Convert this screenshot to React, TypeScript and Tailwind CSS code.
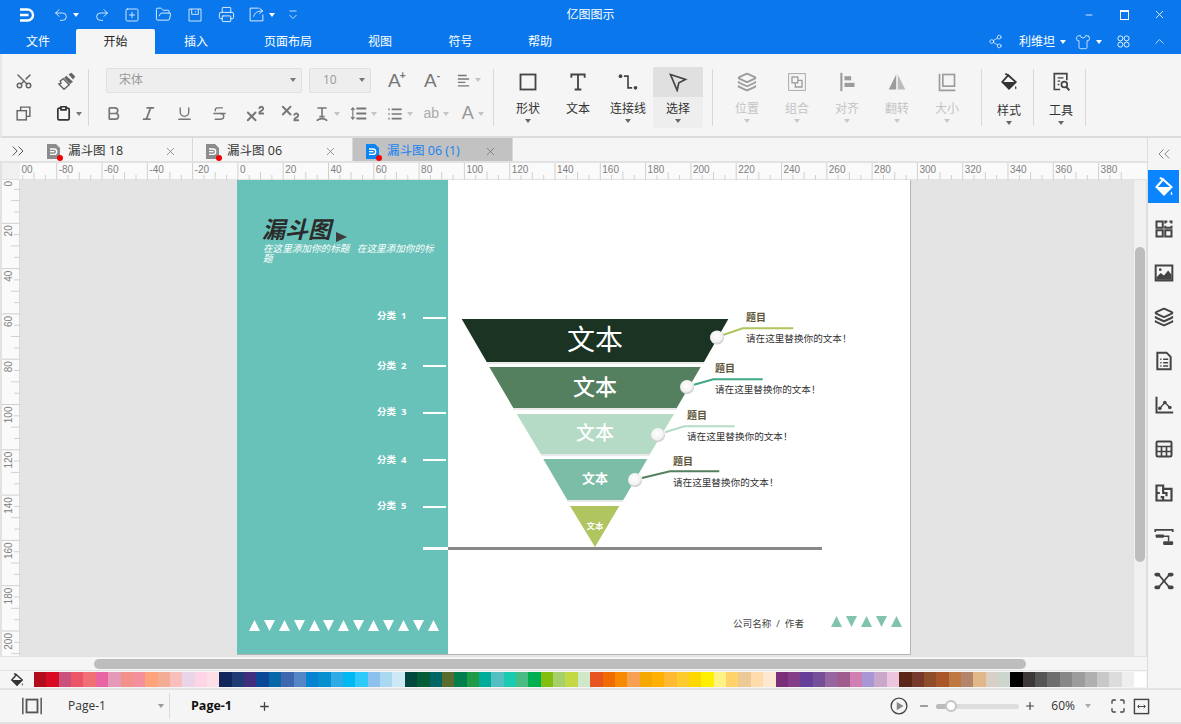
import React from 'react';
import { Undo2, Redo2, SquarePlus, FolderOpen, Printer, Scissors, Layers, Share2, Shirt, ChevronUp, ChevronsRight, ChevronsLeft, X, Minus, Plus, Maximize, Bold, Italic, Underline, Strikethrough, Superscript, Subscript } from 'lucide-react';

const swatches = [
  '#b30c1c', '#d90b22', '#c9517c', '#ec5568', '#f07076', '#e864a3', '#e598b8', '#f19189', '#f4909e', '#ffa37a', '#f3ad97', '#f9bfbd', '#ead5e8', '#ffd5e6', '#fde0e6',
  '#11265a', '#203a75', '#412d7d', '#0a4796', '#0767a8', '#4166b0', '#5586c6', '#0783d2', '#078fd0', '#2eabe4', '#00b8f2', '#2fc9fa', '#8bc1ec', '#a8d9f0', '#cde9f5',
  '#00473e', '#015c37', '#006665', '#5a6b2f', '#007e4c', '#1f9a46', '#00ad9a', '#53bfc3', '#19ccb0', '#48bc83', '#00b050', '#82bd10', '#a6d16a', '#c2d845', '#cfe8c9',
  '#e9531f', '#f06c00', '#f68b00', '#f7a054', '#f5a800', '#ffb000', '#ffba33', '#fdcb2e', '#ffd800', '#fff000', '#fff385', '#ffd36a', '#ecca96', '#fedcab', '#fde8d2',
  '#7b2f78', '#843e89', '#653f98', '#755099', '#96679f', '#a05c8e', '#cf7fb1', '#a996d4', '#c9a8cc', '#eec5df',
  '#5b2618', '#77392c', '#8e4e2a', '#a95728', '#bf783f', '#b3866b', '#e1b988', '#d8cfc6', '#ccd6cd',
  '#000000', '#3c3838', '#555555', '#6d6d6d', '#888888', '#9c9c9c', '#b0b0b0', '#c8c8c8', '#dcdcdc', '#eeeeee', '#ffffff',
];

const menus = [
  { label: '文件', w: 'w-[76px]' },
  { label: '开始', w: 'w-[79px]', active: true },
  { label: '插入', w: 'w-[82px]' },
  { label: '页面布局', w: 'w-[102px]' },
  { label: '视图', w: 'w-[82px]' },
  { label: '符号', w: 'w-[79px]' },
  { label: '帮助', w: 'w-[80px]' },
];

const Caret = ({ color = 'border-t-[#777]' }: { color?: string }) => (
  <span className={`inline-block w-0 h-0 border-x-[3.5px] border-t-[4px] border-x-transparent ${color}`} />
);

const Ico = ({ size = 20, sw = 2, children, className = '' }: { size?: number; sw?: number; children: React.ReactNode; className?: string }) => (
  <svg width={size} height={size} viewBox="0 0 24 24" fill="none" stroke="currentColor" strokeWidth={sw} className={className}>
    {children}
  </svg>
);

const Bucket = ({ size = 20, className = '' }: { size?: number; className?: string }) => (
  <svg width={size} height={size} viewBox="0 0 24 24" className={className}>
    <path d="M11 3 L21 12 L12 21 L3 12 Z" fill="none" stroke="currentColor" strokeWidth="2.4" />
    <path d="M3.5 12 H20.5 L12 20.5 Z" fill="currentColor" />
    <path d="M11 3 L7 1" stroke="currentColor" strokeWidth="2.4" />
    <path d="M21 17 q2 3 0 5 q-2 -2 0 -5" fill="currentColor" />
  </svg>
);

const DocIcon = ({ blue }: { blue?: boolean }) => (
  <span className="relative w-[14px] h-[15px] shrink-0">
    <svg width="14" height="15" viewBox="0 0 14 15" className="block">
      <path d="M0 0 H9 L13 4 V15 H0 Z" fill={blue ? '#0a84f5' : '#8c8c8c'} />
      <path d="M3 5 H7 a2.6 2.6 0 0 1 0 5.4 H3 M3 7.7 H7.5" fill="none" stroke="#fff" strokeWidth="1.3" />
    </svg>
    <span className="absolute -right-[2px] -bottom-[2px] w-[6px] h-[6px] rounded-full bg-[#f00000]" />
  </span>
);

const DocTab = ({ label, active, w }: { label: string; active?: boolean; w: string }) => (
  <div className={`flex items-center h-full pl-[13px] pt-[3px] border-r border-[#d9d9d9] ${w} ${active ? 'bg-[#c2c2c2] text-[#1681f0]' : 'text-[#333]'}`}>
    <DocIcon blue={active} />
    <span className="ml-[7px] text-[12.5px] flex-1">{label}</span>
    <X size={13} strokeWidth={1.2} className="text-[#666] mr-[15px]" />
  </div>
);

const BigButton = ({ label, icon, disabled, active, w = 'w-[50px]', low, noCaret }: { label: string; icon: React.ReactNode; disabled?: boolean; active?: boolean; w?: string; low?: boolean; noCaret?: boolean }) => (
  <div className={`flex flex-col items-center ${w} h-[61px] rounded-[2px] ${active ? 'bg-[#eeeeee]' : ''}`}>
    <div className={`w-full h-[30px] flex items-center justify-center rounded-t-[2px] ${active ? 'bg-[#e0e0e0]' : ''} ${disabled ? 'text-[#9c9c9c]' : 'text-[#444]'}`}>{icon}</div>
    <div className={`text-[12px] leading-[16px] ${low ? 'mt-[6px] text-[#111]' : 'mt-[4px]'} ${disabled ? 'text-[#c4c4c4]' : 'text-[#333]'}`}>{label}</div>
    {!noCaret && <div className="mt-[2px] leading-[6px] flex"><Caret color={disabled ? 'border-t-[#c8c8c8]' : 'border-t-[#666]'} /></div>}
  </div>
);

const Sep = () => <div className="w-px h-[57px] bg-[#d8d8d8] shrink-0" />;

const Cell = ({ children }: { children: React.ReactNode }) => (
  <div className="w-[35.5px] h-[26px] flex items-center justify-center text-[#777]">{children}</div>
);

const DropCell = ({ children }: { children: React.ReactNode }) => (
  <div className="w-[36.5px] h-[26px] flex items-center justify-center gap-[4px] text-[#777]">
    <span className="flex items-center justify-center">{children}</span>
    <Caret color="border-t-[#c4c4c4]" />
  </div>
);

const HRuler = () => {
  const marks = Array.from({ length: 25 }, (_, i) => i - 5);
  return (
    <svg width="1112" height="17" viewBox="20 163 1112 17" className="block font-['Liberation_Sans',sans-serif]">
      {marks.map(k => {
        const x = 237.9 + k * 45.3;
        return (
          <g key={k}>
            <line x1={x} y1={163} x2={x} y2={180} stroke="#d0d0d0" />
            <line x1={x + 11.3} y1={175} x2={x + 11.3} y2={180} stroke="#d0d0d0" />
            <line x1={x + 22.6} y1={172} x2={x + 22.6} y2={180} stroke="#d0d0d0" />
            <line x1={x + 34} y1={175} x2={x + 34} y2={180} stroke="#d0d0d0" />
            {k === -5 ? (
              <text x={21.5} y={172.5} fontSize="10" fill="#808080">00</text>
            ) : (
              <text x={x + 2} y={172.5} fontSize="10" fill="#808080">{k * 20}</text>
            )}
          </g>
        );
      })}
    </svg>
  );
};

const VRuler = () => {
  const marks = Array.from({ length: 11 }, (_, i) => i);
  return (
    <svg width="18" height="476" viewBox="2 180 18 476" className="block font-['Liberation_Sans',sans-serif]">
      {marks.map(k => {
        const y = 178 + k * 45.3;
        return (
          <g key={k}>
            <line x1={2} y1={y} x2={20} y2={y} stroke="#d0d0d0" />
            <line x1={14} y1={y + 11.3} x2={20} y2={y + 11.3} stroke="#d0d0d0" />
            <line x1={11} y1={y + 22.6} x2={20} y2={y + 22.6} stroke="#d0d0d0" />
            <line x1={14} y1={y + 34} x2={20} y2={y + 34} stroke="#d0d0d0" />
            <text x={0} y={0} fontSize="10" fill="#808080" textAnchor="end" transform={`translate(12 ${k === 0 ? y + 3 : y + 2}) rotate(-90)`}>{k * 20}</text>
          </g>
        );
      })}
    </svg>
  );
};

const Tri = ({ down, color }: { down?: boolean; color: string }) => (
  <svg width="11" height="11" viewBox="0 0 11 11" className="block">
    <path d={down ? 'M0 0 H11 L5.5 11 Z' : 'M5.5 0 L11 11 H0 Z'} fill={color} />
  </svg>
);

const categories = [
  { label: '分类  1', top: 'top-[129px]', tick: 'top-[137px]' },
  { label: '分类  2', top: 'top-[179px]', tick: 'top-[185px]' },
  { label: '分类  3', top: 'top-[225px]', tick: 'top-[232px]' },
  { label: '分类  4', top: 'top-[273px]', tick: 'top-[279px]' },
  { label: '分类  5', top: 'top-[319px]', tick: 'top-[326px]' },
];

const callouts = [
  { pos: 'left-[509px] top-[131px]' },
  { pos: 'left-[478px] top-[182px]' },
  { pos: 'left-[450px] top-[229px]' },
  { pos: 'left-[436px] top-[275px]' },
];

const Funnel = () => (
  <svg width="674" height="475" viewBox="237 180 674 475" className="absolute left-0 top-0">
    <defs>
      <radialGradient id="knob" cx="45%" cy="40%" r="60%">
        <stop offset="0%" stopColor="#ffffff" />
        <stop offset="70%" stopColor="#f2f2f2" />
        <stop offset="100%" stopColor="#c4c4c4" />
      </radialGradient>
    </defs>
    <path d="M461.7 319 H728.3 L704 362 H486.7 Z" fill="#1b3322" />
    <line x1="487" y1="363" x2="704" y2="363" stroke="#d4d4d4" />
    <path d="M489.3 367 H700.7 L676.7 408 H513.3 Z" fill="#55805f" />
    <line x1="513" y1="409" x2="677" y2="409" stroke="#d4d4d4" />
    <path d="M516.7 414 H674 L650 454 H540.7 Z" fill="#b5dbc6" />
    <line x1="541" y1="455" x2="650" y2="455" stroke="#d4d4d4" />
    <path d="M543.3 459 H647.3 L623.3 500 H567.3 Z" fill="#7bbda6" />
    <line x1="567" y1="501" x2="623" y2="501" stroke="#d4d4d4" />
    <path d="M570 506 H619.3 L595 547 Z" fill="#b0c45f" />
    <rect x="448" y="547" width="374" height="3" fill="#888888" />

    <polyline points="723,335 742.7,328.3 793.3,328.3" fill="none" stroke="#b0c45f" strokeWidth="2" />
    <polyline points="694,384.7 713.3,379.3 762.7,379.3" fill="none" stroke="#3fa886" strokeWidth="2" />
    <polyline points="665,432.3 684.3,426.3 734.7,426.3" fill="none" stroke="#b5dbc6" strokeWidth="2" />
    <polyline points="642,478 670,471.3 719.3,471.3" fill="none" stroke="#55805f" strokeWidth="2" />

    <circle cx="717" cy="337.5" r="7" fill="url(#knob)" />
    <circle cx="687" cy="387" r="7" fill="url(#knob)" />
    <circle cx="658" cy="435" r="7" fill="url(#knob)" />
    <circle cx="635" cy="480" r="7" fill="url(#knob)" />

    <text x="595" y="350" fontSize="28" fill="#fff" textAnchor="middle">文本</text>
    <text x="595" y="395" fontSize="22" fontWeight="500" fill="#fff" textAnchor="middle">文本</text>
    <text x="595" y="440" fontSize="19" fontWeight="500" fill="#fff" textAnchor="middle">文本</text>
    <text x="595" y="483" fontSize="13" fontWeight="700" fill="#fff" textAnchor="middle">文本</text>
    <text x="595" y="529" fontSize="8.5" fontWeight="700" fill="#fff" textAnchor="middle">文本</text>
  </svg>
);

const sideIcons = [
  <Ico size={20} sw={2.4}><rect x="3" y="3" width="7.5" height="7.5" /><path d="M13.5 5.5 V3 H16 M18.5 3 H21 V5.5 M21 8 V10.5 H13.5 V8" /><rect x="3" y="13.5" width="7.5" height="7.5" /><rect x="13.5" y="13.5" width="7.5" height="7.5" /></Ico>,
  <svg width="20" height="20" viewBox="0 0 24 24"><rect x="2" y="3" width="20" height="18" fill="none" stroke="currentColor" strokeWidth="2.4" /><path d="M3 20 V17 L8 12 L12 15 L17 9 L21 14 V20 Z" fill="currentColor" /><circle cx="7.5" cy="8" r="1.6" fill="currentColor" /></svg>,
  <Layers size={20} strokeWidth={2.4} />,
  <Ico size={20} sw={2.4}><path d="M4 2 H15 L20 7 V22 H4 Z" /><path d="M7.5 10 H9 M11 10 H17 M7.5 14 H9 M11 14 H17 M7.5 18 H9 M11 18 H17" strokeWidth="1.8" /></Ico>,
  <svg width="20" height="20" viewBox="0 0 24 24"><path d="M3 2 V21 H23" fill="none" stroke="currentColor" strokeWidth="2.4" /><path d="M7 16 L13 9 L19 15" fill="none" stroke="currentColor" strokeWidth="1.6" /><circle cx="7" cy="16" r="2.2" fill="currentColor" /><circle cx="13" cy="9" r="2.2" fill="currentColor" /><circle cx="19" cy="15" r="2.2" fill="currentColor" /></svg>,
  <Ico size={20} sw={2.4}><rect x="3" y="3" width="18" height="18" rx="1.5" /><path d="M3 9 H21 M3 15 H21 M9 9 V21 M15 9 V21" strokeWidth="2" /></Ico>,
  <Ico size={20} sw={2.6}><path d="M3 3 H11 V7 H21 V21 H3 Z" /><path d="M3 12 H7 M11 7 V12 H15 V16 M11 21 V17 H8" /></Ico>,
  <svg width="20" height="20" viewBox="0 0 24 24" fill="none" stroke="currentColor"><path d="M1.5 6 V3.5 H22.5 V6" strokeWidth="2" /><rect x="2" y="9" width="10" height="4" rx="1" fill="currentColor" stroke="none" /><path d="M12 11 H17.5 V17" strokeWidth="1.8" /><rect x="11" y="17" width="12" height="4.5" rx="1" fill="currentColor" stroke="none" /></svg>,
  <svg width="20" height="20" viewBox="0 0 24 24"><g fill="currentColor"><rect x="0.5" y="2" width="7" height="4.5" rx="2.2" /><rect x="16.5" y="2" width="7" height="4.5" rx="2.2" /><rect x="0.5" y="17.5" width="7" height="4.5" rx="2.2" /><rect x="16.5" y="17.5" width="7" height="4.5" rx="2.2" /></g><path d="M6 5 L12 12 L6 19 M18 5 L12 12 L18 19 M10 12 H14" fill="none" stroke="currentColor" strokeWidth="2" /></svg>,
];

export default function App() {
  return (
    <div className="w-[1181px] h-[724px] flex flex-col overflow-hidden bg-[#f5f5f5] font-['Open_Sans','Noto_Sans_CJK_SC',sans-serif]">
      {/* title bar */}
      <div className="h-[29px] bg-[#0a78ec] text-white grid grid-cols-[1fr_auto_1fr] items-center shrink-0">
        <div className="flex items-center">
          <svg width="16" height="14" viewBox="0 0 16 14" className="ml-[19px]">
            <path d="M1 1.5 H8.5 a5.5 5.5 0 0 1 0 11 H1 M1 7 H9.5" fill="none" stroke="#fff" strokeWidth="2.4" />
          </svg>
          <Undo2 size={16} strokeWidth={1.2} className="ml-[18px]" />
          <span className="ml-[4px] flex"><Caret color="border-t-white" /></span>
          <Redo2 size={16} strokeWidth={1.2} className="ml-[15px]" />
          <SquarePlus size={16} strokeWidth={1.2} className="ml-[14px]" />
          <FolderOpen size={17} strokeWidth={1.2} className="ml-[15px]" />
          <Ico size={16} sw={1.2} className="ml-[15px]"><path d="M3 3 H21 V21 H3 Z M7 3 V11 H17 V3 M13 6 V8" /></Ico>
          <Printer size={17} strokeWidth={1.2} className="ml-[15px]" />
          <Ico size={17} sw={1.2} className="ml-[13px]"><path d="M15 3 H3 V21 H21 V12 M8 15 C9 10 13 7 20 7 M16 3 L21 7 L16 11" /></Ico>
          <span className="ml-[4px] flex"><Caret color="border-t-white" /></span>
          <Ico size={12} sw={1.5} className="ml-[12px]"><path d="M5 4 H19 M5 12 L12 19 L19 12" /></Ico>
        </div>
        <div className="text-[12px]">亿图图示</div>
        <div className="flex items-center justify-end pr-[15px]">
          <Minus size={10} strokeWidth={2} className="mr-[26px]" />
          <span className="w-[9px] h-[10px] border border-white border-t-2 mr-[24px]" />
          <X size={13} strokeWidth={1.5} />
        </div>
      </div>

      {/* menu tabs */}
      <div className="h-[25px] bg-[#0a78ec] text-white flex items-stretch shrink-0">
        {menus.map(m => (
          <div key={m.label} className={`${m.w} flex items-center justify-center pt-[1px] text-[12px] ${m.active ? 'bg-[#f5f5f5] text-[#222] rounded-t-[2px]' : ''}`}>
            {m.label}
          </div>
        ))}
        <div className="ml-auto flex items-center pr-[14px]">
          <Share2 size={15} strokeWidth={1.1} />
          <span className="ml-[16px] text-[12px]">利维坦</span>
          <span className="ml-[5px] flex"><Caret color="border-t-white" /></span>
          <Shirt size={16} strokeWidth={1.1} className="ml-[9px]" />
          <span className="ml-[5px] flex"><Caret color="border-t-white" /></span>
          <Ico size={15} sw={1.4} className="ml-[14px]"><circle cx="7" cy="7" r="4" /><circle cx="17" cy="7" r="4" /><circle cx="7" cy="17" r="4" /><circle cx="17" cy="17" r="4" /></Ico>
          <ChevronUp size={15} strokeWidth={1.1} className="ml-[21px]" />
        </div>
      </div>

      {/* ribbon */}
      <div className="h-[84px] pt-[4px] border-b-2 border-[#dcdcdc] border-l-2 border-l-[#e8e8e8] flex items-center shrink-0">
        <div className="w-[86px] grid grid-cols-2">
          <div className="h-[33px] flex items-center justify-center text-[#666]"><Scissors size={18} strokeWidth={2} className="-rotate-90" /></div>
          <div className="h-[33px] flex items-center justify-center text-[#666]">
            <svg width="18" height="18" viewBox="0 0 24 24" fill="currentColor"><path d="M14 3 L18 1 L23 6 L20 10 Z" /><path d="M11 5 L20 13 L16 16 L8 8 Z" /><path d="M7 9 L15 17 L8 23 L1 16 L4 15 L3 12 Z" fill="none" stroke="currentColor" strokeWidth="2" /></svg>
          </div>
          <div className="h-[33px] flex items-center justify-center text-[#666]">
            <Ico size={17} sw={2}><rect x="3" y="8" width="13" height="13" /><path d="M8 8 V3 H21 V16 H16" /></Ico>
          </div>
          <div className="h-[33px] flex items-center justify-center gap-[4px] text-[#333] pl-[3px]">
            <Ico size={17} sw={2.4}><path d="M8 4.5 H6 Q4 4.5 4 6.5 V19 Q4 21 6 21 H18 Q20 21 20 19 V6.5 Q20 4.5 18 4.5 H16 M8.5 2.5 H15.5 V7 H8.5 Z" /></Ico>
            <Caret />
          </div>
        </div>
        <Sep />
        <div className="w-[404px] shrink-0 flex flex-col gap-[8px]">
          <div className="flex items-center pl-[17px] h-[25px]">
            <div className="w-[196px] h-[25px] bg-[#eeeeee] border border-[#e0e0e0] rounded-[2px] flex items-center pl-[12px] pr-[5px] justify-between text-[12px] text-[#999]">
              宋体 <Caret />
            </div>
            <div className="ml-[7px] w-[62px] h-[25px] bg-[#eeeeee] border border-[#e0e0e0] rounded-[2px] flex items-center pl-[13px] pr-[5px] justify-between text-[12px] text-[#999]">
              10 <Caret />
            </div>
            <div className="ml-[17px] w-[20px] flex items-start text-[#777] font-['Liberation_Sans',sans-serif] text-[19px] leading-none">A<span className="text-[10px] -ml-[1px] font-bold">+</span></div>
            <div className="ml-[16px] w-[20px] flex items-start text-[#777] font-['Liberation_Sans',sans-serif] text-[19px] leading-none">A<span className="text-[10px] font-bold">-</span></div>
            <div className="ml-[12px] flex items-center gap-[4px] text-[#777]">
              <Ico size={15} sw={2.2}><path d="M3 4 H17 M3 9.5 H21 M3 15 H15 M3 20.5 H21" /></Ico>
              <Caret color="border-t-[#c4c4c4]" />
            </div>
          </div>
          <div className="flex items-center pl-[6.5px] h-[26px] font-['Liberation_Sans',sans-serif]">
            <Cell><Bold size={17} strokeWidth={2.4} /></Cell>
            <Cell><Italic size={17} strokeWidth={2.4} /></Cell>
            <Cell><Underline size={17} strokeWidth={2} /></Cell>
            <Cell><Strikethrough size={17} strokeWidth={2} /></Cell>
            <Cell><Superscript size={23} strokeWidth={2} /></Cell>
            <Cell><Subscript size={23} strokeWidth={2} /></Cell>
            <DropCell><Ico size={16} sw={2.4}><path d="M5 3 H19 M12 3 V16 M8 16 H16 M4 22 Q12 16 20 22" /></Ico></DropCell>
            <DropCell><Ico size={17} sw={2}><path d="M4 4 V20 M1.5 7 L4 4 L6.5 7 M1.5 17 L4 20 L6.5 17" strokeWidth="1.6" /><path d="M9 5 H23 M9 12 H23 M9 19 H23" strokeWidth="2.6" /></Ico></DropCell>
            <DropCell><Ico size={16} sw={2.4}><path d="M2 5 H4 M2 12 H4 M2 19 H4 M7 5 H22 M7 12 H22 M7 19 H22" /></Ico></DropCell>
            <DropCell><span className="text-[14px] text-[#aaa]">ab</span></DropCell>
            <DropCell><span className="text-[18px] text-[#999]">A</span></DropCell>
          </div>
        </div>
        <Sep />
        <div className="flex items-center pl-[9px] gap-0 shrink-0">
          <BigButton label="形状" icon={<Ico size={20} sw={2.2}><rect x="3" y="3" width="18" height="18" /></Ico>} />
          <BigButton noCaret label="文本" icon={<Ico size={20} sw={2.2}><path d="M4 7 V3 H20 V7 M12 3 V21 M8 21 H16" /></Ico>} />
          <BigButton label="连接线" icon={<svg width="20" height="20" viewBox="0 0 24 24"><circle cx="3" cy="5" r="2.2" fill="currentColor" /><circle cx="21" cy="19" r="2.2" fill="currentColor" /><path d="M7 5 H12 V19 H17" fill="none" stroke="currentColor" strokeWidth="2" /></svg>} />
          <BigButton label="选择" active icon={<Ico size={20} sw={2}><path d="M3 3 L21 9 L13 13 L11 22 Z" /></Ico>} />
        </div>
        <div className="ml-[9px] shrink-0"><Sep /></div>
        <div className="flex items-center ml-[9px] shrink-0">
          <BigButton disabled label="位置" icon={<Layers size={20} strokeWidth={2.2} />} />
          <BigButton disabled label="组合" icon={<Ico size={20} sw={1.6}><rect x="2" y="2" width="20" height="20" strokeWidth="1" /><rect x="6" y="6" width="7" height="7" /><path d="M13 10 H18 V18 H10 V13" /></Ico>} />
          <BigButton disabled label="对齐" icon={<svg width="20" height="20" viewBox="0 0 24 24" fill="currentColor"><rect x="4" y="1" width="2.5" height="22" /><rect x="9" y="5" width="8" height="5" /><rect x="9" y="13" width="12" height="5" /></svg>} />
          <BigButton disabled label="翻转" icon={<svg width="20" height="20" viewBox="0 0 24 24" fill="currentColor"><path d="M11 3 V21 H2 Z" /><path d="M13 3 V21 H22 Z" opacity="0.65" /></svg>} />
          <BigButton disabled label="大小" icon={<Ico size={20} sw={2}><path d="M3 2 V22 H22" /><rect x="7" y="3" width="14" height="14" /></Ico>} />
        </div>
        <div className="ml-[9px] shrink-0"><Sep /></div>
        <div className="flex items-center ml-[3px] shrink-0">
          <BigButton low w="w-[48px]" label="样式" icon={<Bucket size={18} className="text-[#333]" />} />
        </div>
        <Sep />
        <div className="flex items-center ml-[3px] shrink-0">
          <BigButton low w="w-[48px]" label="工具" icon={<svg width="20" height="20" viewBox="0 0 24 24" fill="none" stroke="currentColor" strokeWidth="2"><path d="M11 21 H4 V2 H19 V10" /><path d="M8 7 H15 M8 11 H11 M8 15 H10" strokeWidth="1.6" /><circle cx="16" cy="15" r="3.5" /><path d="M18.5 18 L22 22" strokeWidth="2.4" /></svg>} />
        </div>
        <Sep />
      </div>

      {/* body */}
      <div className="flex h-[550px] shrink-0">
        <div className="w-[1147px] shrink-0 flex flex-col">
          <div className="h-[25px] flex items-stretch border-b-2 border-[#e2e2e2] bg-[#f5f5f5]">
            <div className="w-[34px] flex items-center justify-center text-[#555] pl-[2px] pt-[3px]"><ChevronsRight size={20} strokeWidth={1.2} /></div>
            <DocTab label="漏斗图 18" w="w-[159px]" />
            <DocTab label="漏斗图 06" w="w-[160px]" />
            <DocTab label="漏斗图 06 (1)" active w="w-[160px]" />
          </div>
          <div className="h-[17px] flex bg-[#fafafa] border-b border-[#e2e2e2]">
            <div className="w-[20px] bg-[#f0f0f0] border-l-2 border-[#e2e2e2]" />
            <HRuler />
          </div>
          <div className="h-[476px] flex">
            <div className="w-[20px] bg-[#fafafa] border-l-2 border-[#e2e2e2] border-r border-r-[#dcdcdc]"><VRuler /></div>
            <div className="w-[1113px] bg-[#e4e4e4]">
              <div className="relative ml-[217px] w-[674px] h-[475px] bg-white border-r border-b border-[#b5b5b5]">
                <div className="absolute left-0 top-0 w-[211px] h-full bg-[#68c2b9]">
                  <div className="pl-[25px] pt-[35px] flex items-end">
                    <span className="text-[23px] leading-[28px] font-bold italic text-[#2b2b2b]">漏斗图</span>
                    <span className="ml-[5px] mb-[1px] w-0 h-0 border-y-[5px] border-l-[11px] border-y-transparent border-l-[#3b3b3b]" />
                  </div>
                  <p className="pl-[26px] pr-[10px] mt-[1px] text-[9.6px] leading-[10px] italic text-white">在这里添加你的标题&nbsp;&nbsp;&nbsp;在这里添加你的标题</p>
                  {categories.map(c => (
                    <React.Fragment key={c.label}>
                      <span className={`absolute left-[140px] text-[9.5px] font-bold text-white leading-[14px] whitespace-pre ${c.top}`}>{c.label}</span>
                      <span className={`absolute left-[186px] w-[23px] h-[2px] bg-white ${c.tick}`} />
                    </React.Fragment>
                  ))}
                  <span className="absolute left-[186px] top-[367px] w-[25px] h-[3px] bg-white" />
                  <div className="absolute left-[12px] top-[440px] flex gap-[3.9px]">
                    {Array.from({ length: 13 }, (_, i) => <Tri key={i} down={i % 2 === 1} color="#ffffff" />)}
                  </div>
                </div>
                <Funnel />
                {callouts.map(c => (
                  <div key={c.pos} className={`absolute ${c.pos}`}>
                    <div className="text-[10px] leading-[13px] font-bold text-[#5c5437]">题目</div>
                    <div className="mt-[8px] text-[9.6px] leading-[13px] text-[#333] whitespace-nowrap">请在这里替换你的文本！</div>
                  </div>
                ))}
                <div className="absolute left-[496px] top-[437px] text-[9.6px] leading-[13px] text-[#444] whitespace-pre">公司名称  /  作者</div>
                <div className="absolute left-[594px] top-[436px] flex gap-[4px]">
                  {Array.from({ length: 5 }, (_, i) => <Tri key={i} down={i % 2 === 1} color="#82c4ab" />)}
                </div>
              </div>
            </div>
            <div className="w-[14px] bg-[#f0f0f0] border-x border-[#e2e2e2] pt-[67px] pl-[1px]">
              <div className="w-[10px] h-[315px] rounded-full bg-[#bdbdbd]" />
            </div>
          </div>
          <div className="h-[15px] bg-[#f5f5f5] border-y border-[#e2e2e2] flex items-center pl-[94px] pr-[13px]">
            <div className="w-[932px] h-[10px] rounded-full bg-[#bdbdbd]" />
          </div>
          <div className="h-[17px] flex items-center">
            <div className="w-[34px] flex justify-center text-[#333]"><Bucket size={14} /></div>
            <div className="flex h-[15px] w-[1112px]">
              {swatches.map((c, i) => (
                <div key={i} className="flex-1 h-full" style={{ backgroundColor: c }} />
              ))}
            </div>
          </div>
        </div>
        <div className="w-[34px] border-l border-[#dcdcdc] flex flex-col items-center pr-[2px]">
          <div className="h-[32px] flex items-center justify-center text-[#888]"><ChevronsLeft size={20} strokeWidth={1.2} /></div>
          <div className="w-full h-[33px] flex">
            <div className="flex-1 bg-[#0a84ff] text-white flex items-center justify-center"><Bucket size={20} /></div>
          </div>
          <div className="flex flex-col items-center text-[#444] mt-[4px]">
            {sideIcons.map((icon, i) => (
              <div key={i} className="h-[44px] flex items-center justify-center">{icon}</div>
            ))}
          </div>
        </div>
      </div>

      {/* status bar */}
      <div className="h-[36px] border-t-2 border-t-[#e2e2e2] border-b-2 border-b-[#e2e2e2] flex items-center shrink-0 text-[12px] text-[#333]">
        <Ico size={22} sw={1.6} className="ml-[21px] text-[#555]"><path d="M2 3 V21 M22 3 V21" /><rect x="6" y="5" width="12" height="14" strokeWidth="2" /></Ico>
        <span className="ml-[25px] w-[90px]">Page-1</span>
        <Caret color="border-t-[#999]" />
        <span className="ml-[5px] w-px h-[26px] bg-[#dcdcdc]" />
        <span className="ml-[21px] w-[42px] text-[12.5px] font-bold text-[#111]">Page-1</span>
        <Plus size={13} strokeWidth={2.4} className="ml-[25px] text-[#444]" />
        <div className="ml-auto flex items-center">
          <svg width="18" height="18" viewBox="0 0 24 24" className="text-[#444]"><circle cx="12" cy="12" r="10.5" fill="none" stroke="currentColor" strokeWidth="1.8" /><path d="M9 6.5 L18 12 L9 17.5 Z" fill="#888" /></svg>
          <Minus size={12} strokeWidth={2.4} className="ml-[10px] text-[#444]" />
          <div className="relative ml-[6px] w-[83px] h-[5px] rounded-full bg-[#dddddd]">
            <div className="w-[15px] h-full rounded-l-full bg-[#bbbbbb]" />
            <span className="absolute left-[9px] -top-[3.5px] w-[12px] h-[12px] rounded-full bg-white border-2 border-[#c4c4c4]" />
          </div>
          <Plus size={12} strokeWidth={2.4} className="ml-[5px] text-[#444]" />
          <span className="ml-[15px] text-[#333]">60%</span>
          <span className="ml-[10px] flex"><Caret color="border-t-[#aaa]" /></span>
          <Maximize size={16} strokeWidth={2} className="ml-[19px] text-[#444]" />
          <Ico size={17} sw={2} className="ml-[7px] mr-[31px] text-[#444]"><rect x="2" y="2" width="20" height="20" /><path d="M7 12 H17 M9 9.5 L6.5 12 L9 14.5 M15 9.5 L17.5 12 L15 14.5" strokeWidth="1.4" /></Ico>
        </div>
      </div>
    </div>
  );
}
